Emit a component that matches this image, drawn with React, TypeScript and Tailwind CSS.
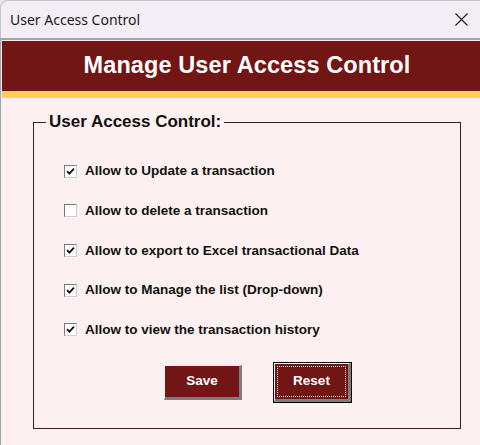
import React from "react";

const items: { label: string; checked: boolean }[] = [
  { label: "Allow to Update a transaction", checked: true },
  { label: "Allow to delete a transaction", checked: false },
  { label: "Allow to export to Excel transactional Data", checked: true },
  { label: "Allow to Manage the list (Drop-down)", checked: true },
  { label: "Allow to view the transaction history", checked: true },
];

function Check({ checked }: { checked: boolean }) {
  return (
    <div className="w-[13px] h-[13px] shrink-0 bg-white border-t border-l border-t-[#7a7a7a] border-l-[#7a7a7a] border-b border-r border-b-[#cfcfcf] border-r-[#cfcfcf] flex items-center justify-center">
      {checked && (
        <svg width="9" height="9" viewBox="0 0 9 9">
          <path d="M1 4.2 L3.4 6.6 L8 1.6" fill="none" stroke="#111" strokeWidth="1.8" />
        </svg>
      )}
    </div>
  );
}

export default function App() {
  return (
    <div className="w-[480px] h-[445px] overflow-hidden bg-[#e9e6ea] font-['Liberation_Sans',Arial,sans-serif]">
      <div className="w-[482px] h-[445px] flex flex-col rounded-tl-[8px] bg-[#f3eef5] border-l border-t border-[#c9c4cb]">
        {/* title bar */}
        <div className="h-[37px] shrink-0 flex items-center justify-between pl-[9px] pr-[12px]">
          <span className="text-[14px] text-[#1b1b1b] font-['Noto_Sans','Open_Sans',sans-serif] leading-none">
            User Access Control
          </span>
          <svg width="13" height="13" viewBox="0 0 13 13" className="mr-[2px]">
            <path d="M0.5 0.5 L12.5 12.5 M12.5 0.5 L0.5 12.5" stroke="#1b1b1b" strokeWidth="1.1" />
          </svg>
        </div>
        {/* client */}
        <div className="flex-1 flex flex-col border-t-2 border-l border-[#a9a4a8] -ml-px">
          <div className="flex-1 flex flex-col border-t border-l border-[#f2eff2]">
            <div className="h-[50px] shrink-0 bg-[#721515] flex items-center justify-center pl-[10px]">
              <span className="text-white font-bold text-[23.5px] leading-none tracking-[0.1px]">
                Manage User Access Control
              </span>
            </div>
            <div className="h-[7px] shrink-0 bg-[#fdd04f]" />
            <div className="flex-1 bg-[#fdf0f0] pl-[31px] pt-[14px]">
              <fieldset className="w-[428px] h-[317px] border border-[#4a1c1c] pl-[12px]">
                <legend className="px-[3px] text-[17px] leading-[20px] font-bold text-[#111]">
                  User Access Control:
                </legend>
                <div className="flex flex-col gap-[19.7px] pt-[29px] pl-[18px]">
                  {items.map((it) => (
                    <div key={it.label} className="h-[20px] flex items-center gap-[8px]">
                      <Check checked={it.checked} />
                      <span className="text-[13.5px] font-bold text-[#111] leading-none">{it.label}</span>
                    </div>
                  ))}
                </div>
                <div className="flex items-center gap-[31px] pl-[118px] mt-[22px]">
                  <button className="w-[78px] h-[35px] bg-[#721515] border-t border-l border-t-[#f4f4f4] border-l-[#f4f4f4] border-b-[3px] border-r-[3px] border-b-[#7d7d7d] border-r-[#7d7d7d] text-white font-bold text-[13.5px]">
                    Save
                  </button>
                  <div className="w-[79px] h-[41px] border border-black">
                    <button className="w-full h-full bg-[#721515] border-t border-l border-t-[#f4f4f4] border-l-[#f4f4f4] border-b-[3px] border-r-[3px] border-b-[#7d7d7d] border-r-[#7d7d7d] p-[2px]">
                      <div className="w-full h-full border border-dotted border-[#e8e8e8] flex items-center justify-center text-white font-bold text-[13.5px]">
                        Reset
                      </div>
                    </button>
                  </div>
                </div>
              </fieldset>
            </div>
          </div>
        </div>
      </div>
    </div>
  );
}
